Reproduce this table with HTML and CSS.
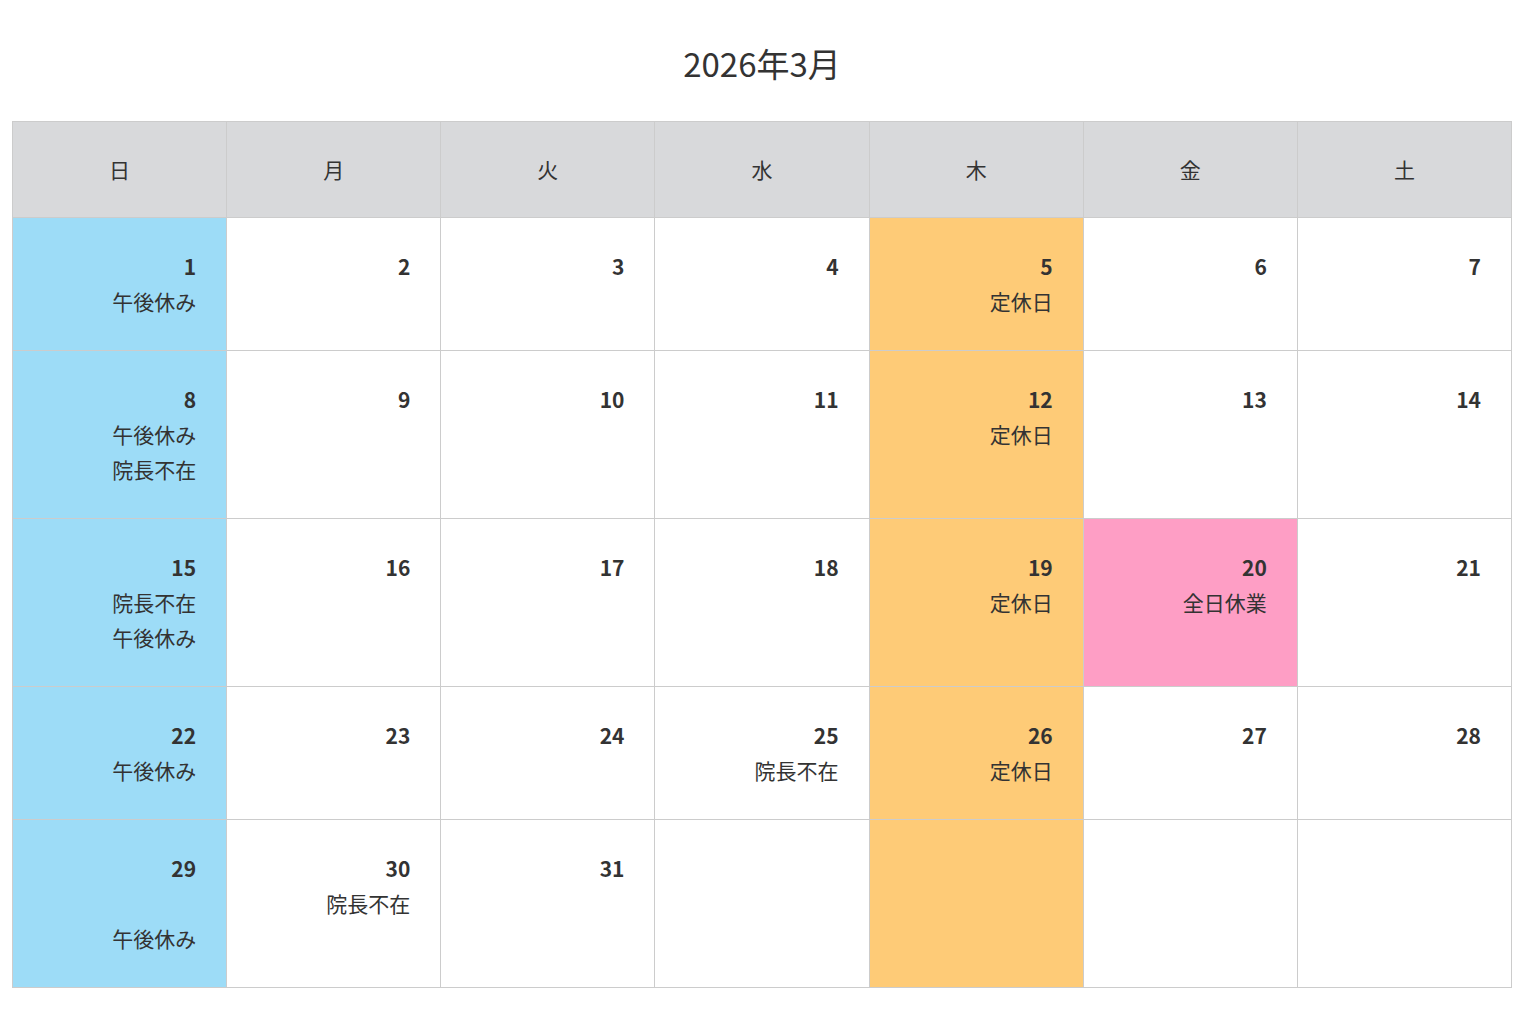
FILE: index.html
```html
<!DOCTYPE html>
<html lang="ja">
<head>
<meta charset="utf-8">
<title>2026年3月</title>
<link rel="stylesheet" href="styles.css">
</head>
<body>
<div class="wrap">
  <h1 class="title">2026年3月</h1>
  <table class="cal">
    <thead>
      <tr><th>日</th><th>月</th><th>火</th><th>水</th><th>木</th><th>金</th><th>土</th></tr>
    </thead>
    <tbody>
      <tr>
        <td class="blue"><b>1</b><br>午後休み</td>
        <td><b>2</b></td>
        <td><b>3</b></td>
        <td><b>4</b></td>
        <td class="orange"><b>5</b><br>定休日</td>
        <td><b>6</b></td>
        <td><b>7</b></td>
      </tr>
      <tr>
        <td class="blue"><b>8</b><br>午後休み<br>院長不在</td>
        <td><b>9</b></td>
        <td><b>10</b></td>
        <td><b>11</b></td>
        <td class="orange"><b>12</b><br>定休日</td>
        <td><b>13</b></td>
        <td><b>14</b></td>
      </tr>
      <tr>
        <td class="blue"><b>15</b><br>院長不在<br>午後休み</td>
        <td><b>16</b></td>
        <td><b>17</b></td>
        <td><b>18</b></td>
        <td class="orange"><b>19</b><br>定休日</td>
        <td class="pink"><b>20</b><br>全日休業</td>
        <td><b>21</b></td>
      </tr>
      <tr>
        <td class="blue"><b>22</b><br>午後休み</td>
        <td><b>23</b></td>
        <td><b>24</b></td>
        <td><b>25</b><br>院長不在</td>
        <td class="orange"><b>26</b><br>定休日</td>
        <td><b>27</b></td>
        <td><b>28</b></td>
      </tr>
      <tr>
        <td class="blue"><b>29</b><br><br>午後休み</td>
        <td><b>30</b><br>院長不在</td>
        <td><b>31</b></td>
        <td></td>
        <td class="orange"></td>
        <td></td>
        <td></td>
      </tr>
    </tbody>
  </table>
</div>
</body>
</html>
```

FILE: styles.css
```css
html, body {
  margin: 0;
  padding: 0;
  background: #fff;
}
body {
  font-family: "Noto Sans CJK JP", "Noto Sans", sans-serif;
  color: #333;
}
.wrap {
  padding: 0 0 0 12px;
}
.title {
  margin: 0 0 40px;
  padding-top: 40px;
  height: 81px;
  box-sizing: border-box;
  text-align: center;
  font-size: 33px;
  line-height: 46px;
  font-weight: 400;
  color: #333;
  width: 1500px;
}
.cal {
  width: 1500px;
  border-collapse: collapse;
  table-layout: fixed;
}
.cal th,
.cal td {
  border: 1px solid #cccccc;
  font-size: 21px;
  line-height: 35px;
}
.cal th {
  background: #d8d9db;
  font-weight: 400;
  text-align: center;
  height: 95px;
  padding: 0;
}
.cal td {
  text-align: right;
  vertical-align: top;
  padding: 31px 30px 31px 20px;
  height: 70px;
}
.cal td b {
  font-weight: 700;
}
.cal td.blue {
  background: #9ddcf7;
}
.cal td.orange {
  background: #fecb77;
}
.cal td.pink {
  background: #fe9ec5;
}
```
